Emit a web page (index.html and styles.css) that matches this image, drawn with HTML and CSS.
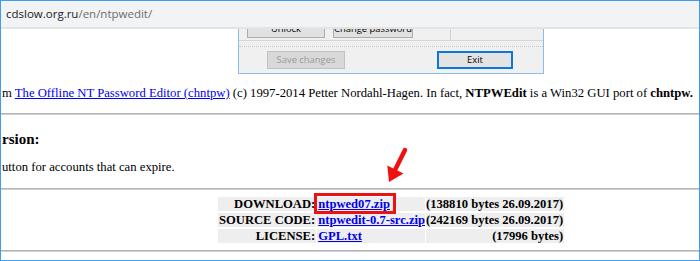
FILE: index.html
```html
<!DOCTYPE html>
<html>
<head>
<meta charset="utf-8">
<link rel="stylesheet" href="styles.css">
</head>
<body>
<div class="frame">
  <div class="addr"><span class="host">cdslow.org.ru</span><span class="path">/en/ntpwedit/</span></div>
  <div class="page">
    <div class="win">
      <div class="win-top">
        <span class="btn btn-unlock">Unlock</span>
        <span class="btn btn-chpw">Change password</span>
        <span class="win-div"></span>
      </div>
      <div class="win-sep"></div>
      <div class="win-bottom">
        <span class="btn btn-save">Save changes</span>
        <span class="btn btn-exit">Exit</span>
      </div>
    </div>
    <p class="line1">m <a href="#">The Offline NT Password Editor (chntpw)</a> (c) 1997-2014 Petter Nordahl-Hagen. In fact, <b>NTPWEdit</b> is a Win32 GUI port of <b>chntpw.</b></p>
    <hr class="rule rule1">
    <h3 class="head">rsion:</h3>
    <p class="line2">utton for accounts that can expire.</p>
    <hr class="rule rule2">
    <table class="dl">
      <tr>
        <td class="lbl">DOWNLOAD:</td>
        <td class="lnk"><a href="#" class="hl">ntpwed07.zip</a></td>
        <td class="size">(138810 bytes 26.09.2017)</td>
      </tr>
      <tr>
        <td class="lbl">SOURCE CODE:</td>
        <td class="lnk"><a href="#">ntpwedit-0.7-src.zip</a></td>
        <td class="size">(242169 bytes 26.09.2017)</td>
      </tr>
      <tr>
        <td class="lbl">LICENSE:</td>
        <td class="lnk"><a href="#">GPL.txt</a></td>
        <td class="size">(17996 bytes)</td>
      </tr>
    </table>
    <hr class="rule rule3">
  </div>
  <svg class="arrow" width="32" height="40" viewBox="0 0 32 40">
    <line x1="24" y1="4" x2="14.5" y2="23" stroke="#f01010" stroke-width="4.5" stroke-linecap="round"/>
    <polygon points="8,36 22.5,27.5 6.3,19.5" fill="#f01010"/>
  </svg>
</div>
</body>
</html>
```

FILE: styles.css
```css
* { box-sizing: border-box; }
html, body { margin: 0; padding: 0; background: #fff; }

.frame {
  position: relative;
  width: 700px;
  height: 261px;
  border: 1px solid #3d9df0;
  overflow: hidden;
  background: #fff;
}

.addr {
  height: 28px;
  background: #f2f3f5;
  border-bottom: 2px solid #e3e4e6;
  padding: 4px 0 0 5px;
  font-family: "Open Sans", "Noto Sans", sans-serif;
  font-size: 11.5px;
  line-height: 18px;
  white-space: nowrap;
}
.host { color: #202124; }
.path { color: #6b6e72; }

.page {
  height: 230px;
  overflow: hidden;
  padding-left: 1px;
  font-family: "Liberation Serif", "Times New Roman", serif;
  font-size: 12.7px;
  color: #000;
}

/* inset window screenshot */
.win {
  margin-left: 236px;
  width: 306px;
  height: 45px;
  background: #f0f0f0;
  border: 1px solid #8cbce9;
  border-top: none;
  font-family: "Open Sans", "Noto Sans", sans-serif;
  font-size: 9.4px;
}
.win-top {
  height: 12px;
  padding-bottom: 2px;
  border-bottom: 1px solid #d6d6d6;
  display: flex;
  align-items: flex-end;
  overflow: hidden;
}
.btn {
  display: flex;
  align-items: center;
  justify-content: center;
  height: 18px;
  background: #e1e1e1;
  border: 1px solid #adadad;
  color: #000;
  flex: none;
  line-height: 1;
}
.btn-unlock { margin-left: 8px; width: 78px; }
.btn-chpw { margin-left: 8px; width: 80px; }
.win-div {
  align-self: stretch;
  margin-left: 37px;
  width: 1px;
  background: #d2d2d2;
  margin-bottom: -2px;
}
.win-sep {
  margin-top: 5px;
  border-top: 1px dotted #c8c8c8;
}
.win-bottom {
  margin-top: 4px;
  display: flex;
}
.btn-save {
  margin-left: 28px;
  width: 78px;
  background: #d8d8d8;
  border-color: #c2c2c2;
  color: #9b9b9b;
}
.btn-exit {
  margin-left: 92px;
  width: 76px;
  border: 2px solid #0a78d4;
  background: #e3e3e3;
}

a { color: #0000ee; }

.line1 {
  margin: 12px 0 0 0;
  line-height: 15px;
  white-space: nowrap;
}
.rule {
  margin: 0;
  height: 2px;
  border: none;
  border-top: 1px solid #b4b4b4;
  border-bottom: 1px solid #d0d0d0;
}
.rule1 { margin-left: -1px; margin-top: 12px; }
.head {
  margin: 15px 0 0 0;
  font-family: "Liberation Serif", "Times New Roman", serif;
  font-size: 15px;
  line-height: 18px;
  font-weight: bold;
}
.line2 {
  margin: 12px 0 0 0;
  line-height: 15px;
}
.rule2 { margin-left: -1px; margin-top: 13px; }

.dl {
  margin: 5px 0 0 215px;
  border-collapse: separate;
  border-spacing: 1px 2px;
  font-family: "Liberation Serif", "Times New Roman", serif;
  font-weight: bold;
  font-size: 12.6px;
}
.dl td {
  background: #eeeeee;
  padding: 0 1px;
  line-height: 14px;
  height: 14px;
  white-space: nowrap;
}
.dl .lbl { text-align: right; }
.dl .lnk { text-align: left; padding: 0 0 0 1px; }
.dl .size { text-align: right; padding: 0 1px 0 0; }

.hl {
  position: relative;
}
.hl::after {
  content: "";
  position: absolute;
  left: -4px;
  right: -6px;
  top: -4px;
  bottom: -3px;
  border: 3px solid #ee1111;
}

.rule3 { margin-left: -1px; margin-top: 5px; }

.arrow {
  position: absolute;
  left: 380px;
  top: 145px;
}
```
